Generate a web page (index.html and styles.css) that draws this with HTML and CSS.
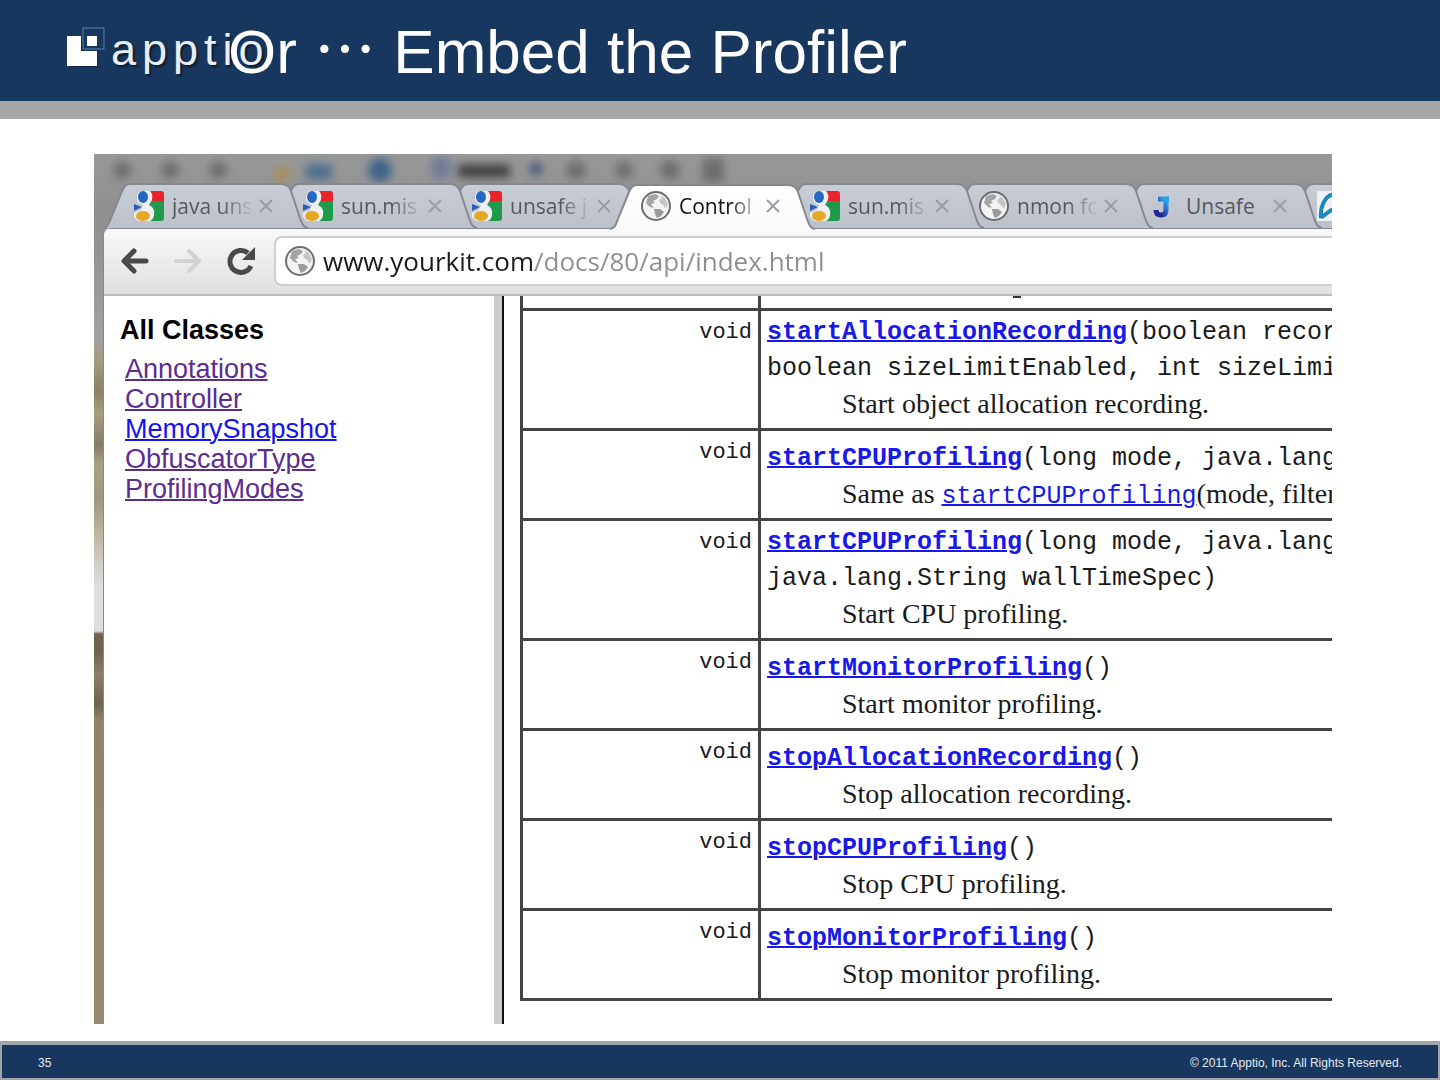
FILE: index.html
```html
<!DOCTYPE html>
<html lang="en">
<head>

<title>Or … Embed the Profiler</title>
<meta charset="utf-8">

<link rel="stylesheet" href="styles.css">

</head>

<body>

<!-- Shared icons -->
<svg class="defs" width="0" height="0">
  <defs>
    <linearGradient id="tab-fill" x1="0" y1="0" x2="0" y2="1">
      <stop offset="0" stop-color="#c9cdd5"/>
      <stop offset="1" stop-color="#bcc1ca"/>
    </linearGradient>
    <linearGradient id="tab-active" x1="0" y1="0" x2="0" y2="1">
      <stop offset="0" stop-color="#ffffff"/>
      <stop offset="1" stop-color="#f9f9f9"/>
    </linearGradient>
    <linearGradient id="blue" x1="0" y1="1" x2="1" y2="0">
      <stop offset="0.2" stop-color="#23249a"/>
      <stop offset="0.8" stop-color="#2d9ee8"/>
    </linearGradient>
    <filter id="soft" x="-50%" y="-50%" width="200%" height="200%"><feGaussianBlur stdDeviation="5"/></filter>
    <path id="tab-shape" d="M0 45C5 44 6 40 8 35L19 8C21 3 23 1 28 1H178C183 1 186 3 188 8L197 35C199 40 200 44 205 45"/>
    <symbol id="google" viewBox="0 0 30 30">
      <path d="M14 0H27Q30 0 30 3V10H14Z" fill="#e8232a"/>
      <path d="M14 10H30V27Q30 30 27 30H14Z" fill="#1f9a4a"/>
      <path d="M9 0H16C18 2 19 5 18 8C18 10 16 12 15 14C19 16 21 19 20 24C20 27 18 29 16 30H4L0 26V22L7 19L9 14C5 13 3 10 3 6C3 3 5 0 9 0Z" fill="#eef0f4"/>
      <ellipse cx="9" cy="6" rx="5" ry="6" fill="#2468c4"/>
      <ellipse cx="9" cy="25" rx="7" ry="5" fill="#e5a823"/>
      <path d="M0 13L8 16L0 20Z" fill="#2a5db8"/>
    </symbol>
    <symbol id="globe" viewBox="0 0 30 30">
      <circle cx="15" cy="15" r="14" fill="#f4f4f4" stroke="#6c6e70" stroke-width="2"/>
      <path d="M7 5L14 3L18 5L16 8L12 10L14 12L10 13L13 17L9 16L5 12Z" fill="#a2a4a6"/>
      <path d="M19 4L24 7L27 13L25 18L22 14L19 12L18 9L21 7Z" fill="#c4c6c8"/>
      <path d="M13 18L19 18L23 21L20 25L16 27L14 23Z" fill="#989a9c"/>
    </symbol>
    <symbol id="cross" viewBox="0 0 14 14">
      <path d="M1 1L13 13M13 1L1 13" fill="none" stroke="#9a9da2" stroke-width="2"/>
    </symbol>
  </defs>
</svg>

<header class="slide-header">
  <div class="logo">
    <svg width="40" height="42" viewBox="0 0 40 42">
      <path d="M3 11H17V24H32V40H3Z" fill="#0d2440" opacity=".6"/>
      <path d="M1 9H15V24H31V39H1Z" fill="#fff"/>
      <path d="M21 9H31V19H21Z" fill="#fff"/>
      <path d="M17 1H38V22H17Z" fill="none" stroke="#5f83ab"/>
    </svg>
    <span class="wordmark">apptio</span>
  </div>
  <h1>Or <span class="dots" lang="ja">…</span> Embed the Profiler</h1>
</header>

<main>
<div class="browser">

  <svg class="glass" width="1238" height="40" viewBox="0 0 1238 40">
    <g filter="url(#soft)">
      <g fill="#6d6d6d">
        <circle cx="28" cy="16" r="9"/><circle cx="76" cy="16" r="9"/><circle cx="124" cy="16" r="9"/>
        <circle cx="482" cy="16" r="10"/><circle cx="530" cy="16" r="9"/><circle cx="576" cy="16" r="10"/>
        <rect x="608" y="4" width="22" height="24"/>
      </g>
      <rect x="364" y="11" width="52" height="12" fill="#3b3b3b"/>
      <circle cx="188" cy="20" r="8" fill="#a88f5a"/>
      <rect x="212" y="10" width="26" height="16" fill="#4d7090"/>
      <circle cx="286" cy="16" r="12" fill="#3c6288"/>
      <rect x="338" y="4" width="18" height="20" fill="#6d7898"/>
      <circle cx="442" cy="15" r="7" fill="#4a5a7a"/>
    </g>
  </svg>

  <nav class="tabs">
    <div class="tab">
      <svg class="shape" width="206" height="46"><use href="#tab-shape"/></svg>
      <svg class="favicon"><use href="#google"/></svg>
      <a class="tab-title" href="#">java uns</a>
      <button class="close" aria-label="Close tab"><svg><use href="#cross"/></svg></button>
    </div>
    <div class="tab">
      <svg class="shape" width="206" height="46"><use href="#tab-shape"/></svg>
      <svg class="favicon"><use href="#google"/></svg>
      <a class="tab-title" href="#">sun.mis</a>
      <button class="close" aria-label="Close tab"><svg><use href="#cross"/></svg></button>
    </div>
    <div class="tab">
      <svg class="shape" width="206" height="46"><use href="#tab-shape"/></svg>
      <svg class="favicon"><use href="#google"/></svg>
      <a class="tab-title" href="#">unsafe j</a>
      <button class="close" aria-label="Close tab"><svg><use href="#cross"/></svg></button>
    </div>
    <div class="tab active">
      <svg class="shape" width="206" height="46"><use href="#tab-shape"/></svg>
      <svg class="favicon"><use href="#globe"/></svg>
      <a class="tab-title" href="#">Control</a>
      <button class="close" aria-label="Close tab"><svg><use href="#cross"/></svg></button>
    </div>
    <div class="tab">
      <svg class="shape" width="206" height="46"><use href="#tab-shape"/></svg>
      <svg class="favicon"><use href="#google"/></svg>
      <a class="tab-title" href="#">sun.mis</a>
      <button class="close" aria-label="Close tab"><svg><use href="#cross"/></svg></button>
    </div>
    <div class="tab">
      <svg class="shape" width="206" height="46"><use href="#tab-shape"/></svg>
      <svg class="favicon"><use href="#globe"/></svg>
      <a class="tab-title" href="#">nmon fo</a>
      <button class="close" aria-label="Close tab"><svg><use href="#cross"/></svg></button>
    </div>
    <div class="tab">
      <svg class="shape" width="206" height="46"><use href="#tab-shape"/></svg>
      <svg class="favicon" viewBox="0 0 30 30"><path d="M10 8H21M18 8V19Q18 24 13 24Q8 24 8 19" fill="none" stroke="url(#blue)" stroke-width="5"/></svg>
      <a class="tab-title short" href="#">Unsafe</a>
      <button class="close" aria-label="Close tab"><svg><use href="#cross"/></svg></button>
    </div>
    <div class="tab">
      <svg class="shape" width="206" height="46"><use href="#tab-shape"/></svg>
      <svg class="favicon" viewBox="0 0 30 30"><path d="M0 0H30V30H0Z" fill="#eef1f5"/><path d="M4 27C3 17 7 4 18 3M4 26C9 25 12 18 20 17" fill="none" stroke="#1b87bd" stroke-width="4"/></svg>
    </div>
  </nav>

  <div class="window">
    <form class="toolbar">
      <button type="button" aria-label="Back">
        <svg width="30" height="30" viewBox="0 0 30 30"><path d="M26 15H5M14 5L4 15L14 25" fill="none" stroke="#4a4a4a" stroke-width="5" stroke-linecap="round" stroke-linejoin="round"/></svg>
      </button>
      <button type="button" aria-label="Forward">
        <svg width="30" height="30" viewBox="0 0 30 30"><path d="M3 15H25M16 5L26 15L16 25" fill="none" stroke="#d2d2d2" stroke-width="4" stroke-linecap="round" stroke-linejoin="round"/></svg>
      </button>
      <button type="button" aria-label="Reload">
        <svg width="30" height="30" viewBox="0 0 30 30"><path d="M25 20A11 11 0 1 1 22 7" fill="none" stroke="#4a4a4a" stroke-width="5"/><path d="M29 1V14H16Z" fill="#4a4a4a"/></svg>
      </button>
      <div class="omnibox">
        <svg width="30" height="30"><use href="#globe"/></svg>
        <input class="url" type="text" aria-label="Address" value="www.yourkit.com/docs/80/api/index.html">
      </div>
    </form>

    <div class="frames">
      <aside class="classes">
        <h2>All Classes</h2>
        <ul>
          <li><a href="#">Annotations</a></li>
          <li><a href="#">Controller</a></li>
          <li><a class="unvisited" href="#">MemorySnapshot</a></li>
          <li><a href="#">ObfuscatorType</a></li>
          <li><a href="#">ProfilingModes</a></li>
        </ul>
      </aside>

      <section class="methods">
        <table>
          <tr class="cut">
            <td></td>
            <td><div class="tail"></div></td>
          </tr>
          <tr class="tall">
            <td>void</td>
            <td>
              <code><a href="#">startAllocationRecording</a>(boolean recor<br>boolean sizeLimitEnabled, int sizeLimi</code>
              <p>Start object allocation recording.</p>
            </td>
          </tr>
          <tr>
            <td>void</td>
            <td>
              <code><a href="#">startCPUProfiling</a>(long mode, java.lang</code>
              <p>Same as <a href="#">startCPUProfiling</a>(mode, filter</p>
            </td>
          </tr>
          <tr class="tall">
            <td>void</td>
            <td>
              <code><a href="#">startCPUProfiling</a>(long mode, java.lang<br>java.lang.String wallTimeSpec)</code>
              <p>Start CPU profiling.</p>
            </td>
          </tr>
          <tr>
            <td>void</td>
            <td>
              <code><a href="#">startMonitorProfiling</a>()</code>
              <p>Start monitor profiling.</p>
            </td>
          </tr>
          <tr>
            <td>void</td>
            <td>
              <code><a href="#">stopAllocationRecording</a>()</code>
              <p>Stop allocation recording.</p>
            </td>
          </tr>
          <tr>
            <td>void</td>
            <td>
              <code><a href="#">stopCPUProfiling</a>()</code>
              <p>Stop CPU profiling.</p>
            </td>
          </tr>
          <tr>
            <td>void</td>
            <td>
              <code><a href="#">stopMonitorProfiling</a>()</code>
              <p>Stop monitor profiling.</p>
            </td>
          </tr>
        </table>
      </section>
    </div>
  </div>

</div>
</main>

<footer class="slide-footer">
  <span>35</span>
  <span>© 2011 Apptio, Inc. All Rights Reserved.</span>
</footer>

</body>

</html>
```

FILE: styles.css
```css
* { box-sizing: border-box; }

body {
  margin: 0;
  min-height: 100vh;
  display: flex;
  flex-direction: column;
  background: #fff;
  font-family: "Liberation Sans", Arial, sans-serif;
}

h1, h2, p, ul { margin: 0; padding: 0; }

button {
  display: flex;
  padding: 0;
  border: 0;
  background: none;
}

.defs { position: absolute; }

/* Slide */

.slide-header {
  position: relative;
  padding: 15px 0 16px 228px;
  background: #18375e;
  border-bottom: 18px solid #a6a6a6;
}

.slide-header h1 {
  position: relative;
  height: 70px;
  color: #fff;
  font-size: 62px;
  font-weight: 400;
  line-height: 70px;
  white-space: nowrap;
}

.dots {
  font-family: "Noto Sans CJK JP", sans-serif;
  line-height: 1;
}

.logo {
  position: absolute;
  left: 66px;
  top: 27px;
  display: flex;
  gap: 5px;
}

.wordmark {
  color: #e9eef4;
  font-size: 45px;
  line-height: 46px;
  letter-spacing: 6px;
  text-shadow: 2px 2px 2px #0a1c33;
}

main {
  flex: 1;
  display: flex;
  padding: 35px 108px 17px 94px;
}

.slide-footer {
  display: flex;
  justify-content: space-between;
  padding: 10px 36px 6px;
  background: #18375e;
  border: 2px solid #a0a4a8;
  border-top-width: 4px;
  color: #e4ebf3;
  font-size: 12px;
  line-height: 17px;
}

/* Browser */

.browser {
  position: relative;
  flex: 1;
  min-width: 0;
  display: flex;
  flex-direction: column;
  overflow: hidden;
  padding: 29px 0 0 9px;
  background: linear-gradient(#999 0, #8f8f8f 60px, #a0a0a2 185px, #a59c80 205px, #8a8068 238px, #a89e80 260px, #857b68 290px, #aaa184 310px, #a0967e 345px, #bdb6a0 380px, #ddd 430px, #ddd 477px, #74634c 480px, #6f6350 498px, #8f8068 520px, #6f6450 550px, #908268 565px, #978a70 100%);
}

.glass {
  position: absolute;
  left: 0;
  top: 0;
}

.tabs {
  position: relative;
  z-index: 0;
  display: flex;
  height: 45px;
}

.tab {
  position: relative;
  flex: none;
  display: flex;
  align-items: center;
  width: 169px;
  padding-left: 31px;
  z-index: 1;
}

/* each tab overlaps the one on its right */
.tab:nth-child(1) { z-index: 8; }
.tab:nth-child(2) { z-index: 7; }
.tab:nth-child(3) { z-index: 6; }
.tab:nth-child(5) { z-index: 5; }
.tab:nth-child(6) { z-index: 4; }
.tab:nth-child(7) { z-index: 3; }
.tab.active { z-index: 9; }

.shape {
  position: absolute;
  left: 0;
  top: 0;
  fill: url(#tab-fill);
  stroke: #85898f;
  stroke-width: 2;
}

/* covers the line on top of the toolbar */
.active .shape {
  top: 1px;
  fill: url(#tab-active);
}

.favicon {
  position: relative;
  flex: none;
  width: 30px;
  height: 30px;
}

.tab-title {
  position: relative;
  flex: none;
  width: 79px;
  margin-left: 8px;
  overflow: hidden;
  color: #55585e;
  font: 21px/30px "Open Sans", sans-serif;
  text-decoration: none;
  white-space: nowrap;
  -webkit-mask-image: linear-gradient(to right, #000 50px, transparent 82px);
  mask-image: linear-gradient(to right, #000 50px, transparent 82px);
}

.short { -webkit-mask-image: none; mask-image: none; }
.active .tab-title { color: #111; }

.close {
  position: relative;
  flex: none;
  margin-left: 8px;
}

.close svg { width: 14px; height: 14px; }

.window {
  flex: 1;
  display: flex;
  flex-direction: column;
  background: #fff;
  border-left: 1px solid #888;
  border-top-left-radius: 8px;
  overflow: hidden;
}

.toolbar {
  display: flex;
  align-items: center;
  gap: 23px;
  height: 68px;
  padding: 0 0 1px 16px;
  background: linear-gradient(#f9f9f9, #e0e0e0);
  border-top: 1px solid #85898f;
  border-bottom: 2px solid #bdbdbd;
}

.omnibox {
  flex: 1;
  display: flex;
  align-items: center;
  gap: 8px;
  height: 50px;
  margin-left: -5px;
  padding-left: 9px;
  background: #fff;
  border: 2px solid #cfcfcf;
  border-right: 0;
  border-radius: 8px 0 0 8px;
}

/* host in black, path in grey */
.url {
  flex: 1;
  padding: 0;
  border: 0;
  outline: none;
  font: 26px/36px "Open Sans", sans-serif;
  background: linear-gradient(to right, #1a1a1a 212px, #8e8e8e 212px);
  -webkit-background-clip: text;
  background-clip: text;
  -webkit-text-fill-color: transparent;
}

/* Javadoc */

.frames {
  flex: 1;
  display: flex;
}

.classes {
  flex: none;
  width: 400px;
  padding: 19px 0 0 16px;
  border-right: 2px solid #111;
  box-shadow: inset -8px 0 #cdcdcd;
}

.classes h2 {
  font-size: 27px;
  line-height: 30px;
}

.classes ul {
  margin: 9px 0 0 5px;
  list-style: none;
  font-size: 27px;
  line-height: 30px;
}

.classes a { color: #5c2d91; text-decoration-thickness: 2px; }
.classes .unvisited { color: #1414f0; }

.methods {
  flex: 1;
  min-width: 0;
  overflow: hidden;
  padding-left: 16px;
}

table {
  width: 100%;
  table-layout: fixed;
  border-collapse: collapse;
}

td {
  height: 90px;
  padding: 10px 0 0 6px;
  border-left: 3px solid #444;
  border-bottom: 3px solid #444;
  color: #1a1a1a;
  white-space: nowrap;
  vertical-align: top;
}

.tall td { height: 120px; padding-top: 4px; }

td:first-child,
.tall td:first-child {
  width: 238px;
  padding: 4px 6px 0 0;
  font: 22px/36px "Liberation Mono", monospace;
  text-align: right;
}

.cut td,
.cut td:first-child {
  height: 13px;
  padding: 0;
}

.tail {
  width: 8px;
  height: 2px;
  margin-left: 252px;
  background: #333;
}

code {
  display: block;
  font: 25px/36px "Liberation Mono", monospace;
}

td a {
  color: #1818e8;
  text-decoration-thickness: 2px;
}

code a { font-weight: 700; }

td p {
  margin-left: 75px;
  font: 28px/34px "Liberation Serif", serif;
}

p a { font: 25px/1 "Liberation Mono", monospace; }
```
